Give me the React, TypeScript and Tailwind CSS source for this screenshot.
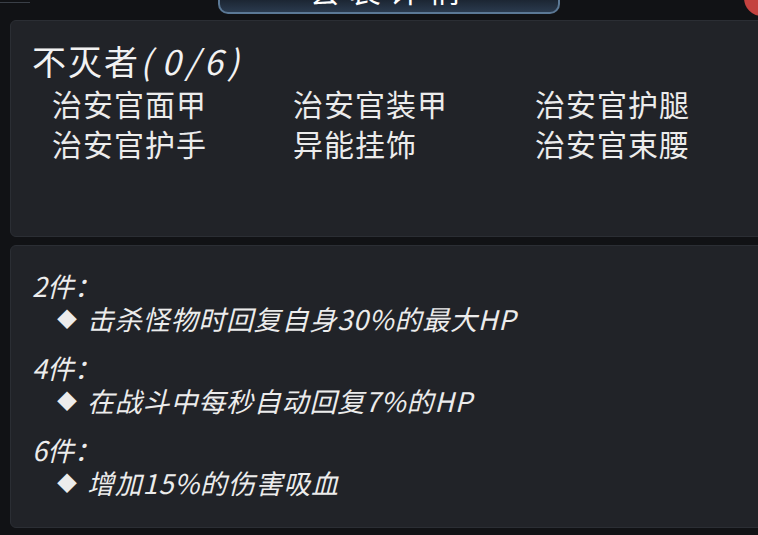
import React from 'react';

const pieces = [
  '治安官面甲',
  '治安官装甲',
  '治安官护腿',
  '治安官护手',
  '异能挂饰',
  '治安官束腰',
];

const bonuses = [
  { count: '2件：', text: '击杀怪物时回复自身30%的最大HP' },
  { count: '4件：', text: '在战斗中每秒自动回复7%的HP' },
  { count: '6件：', text: '增加15%的伤害吸血' },
];

export default function App() {
  return (
    <div
      className="relative w-[758px] h-[535px] overflow-hidden bg-[#111215] text-[#ececec]"
      style={{ fontFamily: '"Noto Sans CJK SC", "Noto Sans", sans-serif' }}
    >
      {/* outer frame edge */}
      <div className="absolute left-[-30px] top-[2px] w-[60px] h-[60px] rounded-tl-[30px] border-l border-t border-[#3a3f47]" />

      {/* close button peeking in */}
      <div className="absolute right-[-22px] top-[-20px] w-[36px] h-[36px] rounded-full bg-[#c4423f]" />

      {/* header tab */}
      <div className="h-[20px]">
        <div className="ml-[218px] w-[342px] h-[14px] overflow-hidden rounded-b-[10px] border-2 border-t-0 border-[#5b7895] bg-gradient-to-b from-[#1c2633] to-[#2a3a4e]">
          <div className="-mt-[30px] text-center text-[32px] leading-[36px] tracking-[8px] text-white">套装详情</div>
        </div>
      </div>

      <div className="flex flex-col gap-[8px] pl-[10px]">
        <div className="w-[760px] h-[217px] rounded-[6px] bg-[#212328] border border-[#2b2e34] pl-[21px] pt-[20px]">
          <div className="text-[34px] leading-[40px] text-[#f2f2f2] tracking-[2px]">
            不灭者
            <span className="italic tracking-[5px]">(<span className="ml-[5px]">0/6</span>)</span>
          </div>
          <div className="grid grid-cols-[241px_242px_220px] pl-[20px] mt-[2px] text-[30px] leading-[40px] tracking-[1px]">
            {pieces.map((p) => (
              <div key={p}>{p}</div>
            ))}
          </div>
        </div>

        <div className="w-[760px] h-[283px] rounded-[6px] bg-[#212328] border border-[#2b2e34] pl-[21px] pt-[23px]">
          {bonuses.map((b) => (
            <div key={b.count} className="mb-[16px] italic text-[27px]">
              <div className="leading-[33px]">{b.count}</div>
              <div className="flex items-center leading-[33px] pl-[25px]">
                <span className="not-italic text-[20px] mr-[10px]">◆</span>
                <span className="tracking-[0.8px]">{b.text}</span>
              </div>
            </div>
          ))}
        </div>
      </div>
    </div>
  );
}
